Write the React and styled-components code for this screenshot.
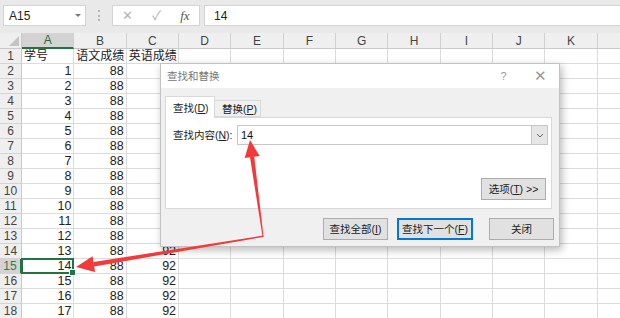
import React from 'react'
import styled, { createGlobalStyle } from 'styled-components'

const GlobalStyle = createGlobalStyle`
  * { box-sizing: border-box; }
  body {
    margin: 0;
    background: #fff;
    font-family: "Liberation Sans", "Noto Sans CJK SC", sans-serif;
  }
`

const Window = styled.div`
  position: relative;
  width: 620px;
  height: 318px;
  overflow: hidden;
  background: #fff;
`

const Toolbar = styled.div`
  display: flex;
  align-items: flex-start;
  height: 33px;
  padding: 5px 0 0 3px;
  background: #e9e9e9;
`

const NameBox = styled.div`
  display: flex;
  align-items: center;
  justify-content: space-between;
  width: 83px;
  height: 21px;
  padding: 0 4px 0 5px;
  background: #fff;
  border: 1px solid #d4d4d4;
  font-size: 12px;
  line-height: 14px;
  color: #222;
`

const Caret = styled.span`
  width: 0;
  height: 0;
  border-left: 3px solid transparent;
  border-right: 3px solid transparent;
  border-top: 3px solid #777;
`

const Grip = styled.div`
  width: 2px;
  height: 11px;
  margin: 5px 12px 0 12px;
  border-left: 2px dotted #b8b8b8;
`

const FxBox = styled.div`
  display: flex;
  align-items: center;
  justify-content: space-around;
  width: 88px;
  height: 21px;
  background: #fff;
  border: 1px solid #d4d4d4;
  color: #b4b4b4;
  font-size: 13px;
  line-height: 15px;
`

const FxLabel = styled.span`
  font-family: "Liberation Serif", serif;
  font-style: italic;
  color: #555;
  font-size: 13px;
`

const Formula = styled.div`
  flex: 1;
  height: 21px;
  margin-left: 4px;
  padding-left: 9px;
  display: flex;
  align-items: center;
  background: #fff;
  border: 1px solid #d4d4d4;
  border-right: none;
  font-size: 12px;
  line-height: 14px;
  color: #222;
`

const Sheet = styled.div`
  display: grid;
  grid-template-columns: 22px repeat(12, 52.35px);
  grid-template-rows: 16px;
  grid-auto-rows: 15px;
`

const Corner = styled.div`
  position: relative;
  background: #efefef;
  border-right: 1px solid #c9c9c9;
  border-bottom: 1px solid #c9c9c9;
  &::after {
    content: '';
    position: absolute;
    right: 2px;
    bottom: 2px;
    border-left: 10px solid transparent;
    border-bottom: 10px solid #c4c4c4;
  }
`

const ColHead = styled.div`
  display: flex;
  align-items: center;
  justify-content: center;
  font-size: 12px;
  line-height: 14px;
  color: ${p => (p.$active ? '#1f6b3f' : '#444')};
  background: ${p => (p.$active ? '#d3d3d3' : '#efefef')};
  border-right: 1px solid #d0d0d0;
  border-bottom: ${p => (p.$active ? '2px solid #217346' : '1px solid #c9c9c9')};
`

const RowHead = styled.div`
  display: flex;
  align-items: center;
  justify-content: center;
  font-size: 12px;
  line-height: 14px;
  color: ${p => (p.$active ? '#2e7d4f' : '#444')};
  background: ${p => (p.$active ? '#d3d3d3' : '#efefef')};
  border-right: ${p => (p.$active ? '2px solid #217346' : '1px solid #c9c9c9')};
  border-bottom: 1px solid #d4d4d4;
`

const Cell = styled.div`
  position: relative;
  display: flex;
  align-items: center;
  justify-content: ${p => (p.$text ? 'flex-start' : 'flex-end')};
  padding: 0 2px;
  font-size: ${p => (p.$text ? '12px' : '12.5px')};
  line-height: 14px;
  white-space: nowrap;
  color: #222;
  border-right: 1px solid #dcdcdc;
  border-bottom: 1px solid #dcdcdc;
  ${p => p.$selected && `
    &::after {
      content: '';
      position: absolute;
      left: -1px; top: -1px; right: -1px; bottom: -1px;
      border: 2px solid #217346;
    }
    &::before {
      content: '';
      position: absolute;
      right: -3px; bottom: -3px;
      width: 5px; height: 5px;
      background: #217346;
      border: 1px solid #fff;
      z-index: 1;
    }
  `}
`

const Dialog = styled.div`
  position: absolute;
  left: 160px;
  top: 63px;
  width: 400px;
  height: 184px;
  display: flex;
  flex-direction: column;
  background: #f0f0f0;
  border: 1px solid #c2c2c2;
  box-shadow: 2px 3px 8px rgba(0, 0, 0, 0.28);
`

const TitleBar = styled.div`
  display: flex;
  align-items: center;
  height: 24px;
  padding: 0 0 0 6px;
  background: #fff;
  font-size: 10.5px;
  line-height: 14px;
  color: #777;
`

const TitleText = styled.span`
  flex: 1;
`

const TitleBtn = styled.span`
  width: 37px;
  text-align: center;
  color: #999;
  line-height: 16px;
  font-size: ${p => (p.$big ? '15px' : '11px')};
`

const Tabs = styled.div`
  display: flex;
  align-items: flex-end;
  height: 29px;
  padding-left: 4px;
`

const Tab = styled.div`
  display: flex;
  align-items: center;
  padding: 0 7px;
  height: ${p => (p.$active ? '22px' : '17px')};
  width: ${p => (p.$active ? '50px' : '46px')};
  margin-bottom: ${p => (p.$active ? '-1px' : '0')};
  background: ${p => (p.$active ? '#fff' : '#f0f0f0')};
  border: 1px solid #d9d9d9;
  border-bottom: ${p => (p.$active ? 'none' : '1px solid #d9d9d9')};
  border-left: ${p => (p.$active ? '1px solid #d9d9d9' : 'none')};
  font-size: 10.5px;
  line-height: 14px;
  color: #222;
  position: relative;
  z-index: 1;
  white-space: nowrap;
`

const U = styled.span`
  text-decoration: underline;
`

const Panel = styled.div`
  display: flex;
  flex-direction: column;
  height: 92px;
  margin: 0 7px 0 4px;
  padding: 7px 3px 0 7px;
  background: #fff;
  border: 1px solid #d9d9d9;
`

const Field = styled.div`
  display: flex;
  align-items: center;
  height: 20px;
`

const Label = styled.span`
  width: 64px;
  font-size: 10.5px;
  line-height: 14px;
  color: #222;
  white-space: nowrap;
`

const Input = styled.div`
  flex: 1;
  display: flex;
  align-items: center;
  height: 20px;
  border: 1px solid #c6c6c6;
  font-size: 11px;
  line-height: 14px;
  color: #111;
`

const InputText = styled.span`
  flex: 1;
  padding-left: 3px;
`

const DropBtn = styled.span`
  display: flex;
  align-items: center;
  justify-content: center;
  width: 16px;
  height: 18px;
  background: #e6e6e6;
  border-left: 1px solid #c6c6c6;
`

const Options = styled.div`
  display: flex;
  justify-content: flex-end;
  margin-top: 33px;
  padding-right: 2px;
`

const Button = styled.div`
  display: flex;
  align-items: center;
  justify-content: center;
  width: ${p => p.$w}px;
  height: 22px;
  margin-left: ${p => p.$gap || 0}px;
  background: #e1e1e1;
  border: ${p => (p.$focus ? '1px solid #0078d7' : '1px solid #adadad')};
  box-shadow: ${p => (p.$focus ? 'inset 0 0 0 1px #0078d7' : 'none')};
  font-size: 10.5px;
  line-height: 14px;
  color: #222;
  white-space: nowrap;
`

const Footer = styled.div`
  display: flex;
  justify-content: flex-end;
  padding: 9px 5px 0 0;
`

const Overlay = styled.svg`
  position: absolute;
  left: 0;
  top: 0;
  pointer-events: none;
`

const cols = ['A', 'B', 'C', 'D', 'E', 'F', 'G', 'H', 'I', 'J', 'K', '']

function Row({ r }) {
  const a = r === 1 ? '学号' : r - 1
  const b = r === 1 ? '语文成绩' : 88
  const c = r === 1 ? '英语成绩' : 92
  const text = r === 1
  return (
    <>
      <RowHead $active={r === 15}>{r}</RowHead>
      <Cell $text={text} $selected={r === 15}>{a}</Cell>
      <Cell $text={text}>{b}</Cell>
      <Cell $text={text}>{c}</Cell>
      {cols.slice(3).map((k, i) => <Cell key={i} />)}
    </>
  )
}

export default function App() {
  const rows = Array.from({ length: 18 }, (_, i) => i + 1)
  return (
    <Window>
      <GlobalStyle />
      <Toolbar>
        <NameBox>A15<Caret /></NameBox>
        <Grip />
        <FxBox>
          <span>✕</span>
          <span>✓</span>
          <FxLabel>fx</FxLabel>
        </FxBox>
        <Formula>14</Formula>
      </Toolbar>

      <Sheet>
        <Corner />
        {cols.map((c, i) => <ColHead key={i} $active={c === 'A'}>{c}</ColHead>)}
        {rows.map(r => <Row key={r} r={r} />)}
      </Sheet>

      <Dialog>
        <TitleBar>
          <TitleText>查找和替换</TitleText>
          <TitleBtn>?</TitleBtn>
          <TitleBtn $big>✕</TitleBtn>
        </TitleBar>
        <Tabs>
          <Tab $active>查找(<U>D</U>)</Tab>
          <Tab>替换(<U>P</U>)</Tab>
        </Tabs>
        <Panel>
          <Field>
            <Label>查找内容(<U>N</U>):</Label>
            <Input>
              <InputText>14</InputText>
              <DropBtn>
                <svg width="8" height="5" viewBox="0 0 8 5">
                  <path d="M1 1 L4 4 L7 1" fill="none" stroke="#666" strokeWidth="1" />
                </svg>
              </DropBtn>
            </Input>
          </Field>
          <Options>
            <Button $w={65}>选项(<U>T</U>) &gt;&gt;</Button>
          </Options>
        </Panel>
        <Footer>
          <Button $w={65}>查找全部(<U>I</U>)</Button>
          <Button $w={76} $gap={9} $focus>查找下一个(<U>F</U>)</Button>
          <Button $w={65} $gap={16}>关闭</Button>
        </Footer>
      </Dialog>

      <Overlay width="620" height="318" viewBox="0 0 620 318">
        <polygon points="262.6,237 263.6,237 254.2,156.6 250,157.2" fill="#f23a3a" />
        <polygon points="250,140 259.6,156 244.7,158" fill="#f23a3a" />
        <polygon points="263,235.6 263.3,237 94.2,266.4 93.4,262" fill="#f23a3a" />
        <polygon points="76,267 92.5,256.3 95.1,272.1" fill="#f23a3a" />
      </Overlay>
    </Window>
  )
}
